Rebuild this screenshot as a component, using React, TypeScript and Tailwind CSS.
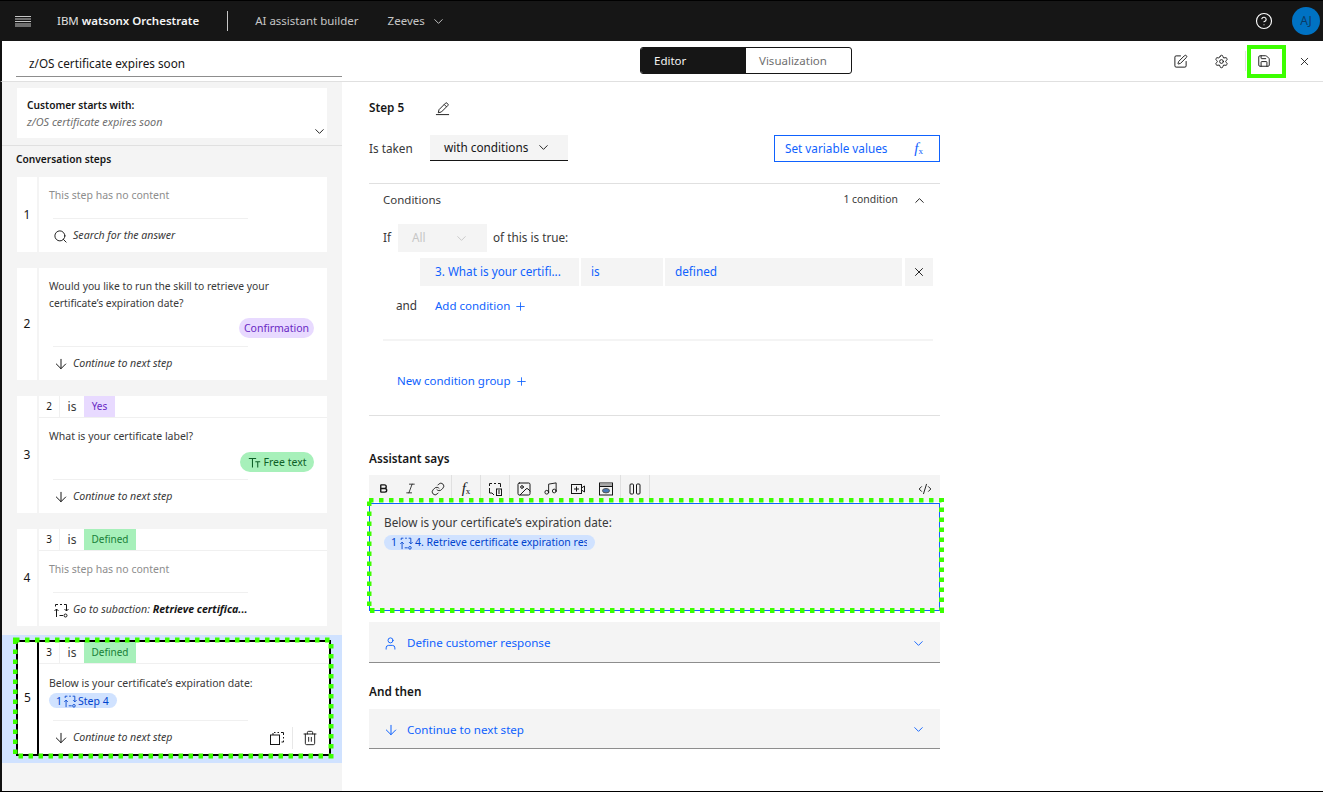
import type { ReactNode } from "react";
import {
  ArrowDown,
  Bold,
  ChevronDown,
  ChevronUp,
  CircleHelp,
  CodeXml,
  Image,
  Italic,
  Link,
  Music,
  Plus,
  Save,
  Search,
  Settings,
  SquarePen,
  Trash2,
  User,
  X,
} from "lucide-react";

function SubactionIcon({ size = 16 }: { size?: number }) {
  return (
    <svg width={size} height={size} viewBox="0 0 16 16" fill="none" stroke="currentColor" strokeWidth="1" className="shrink-0">
      <path d="M2.5 4.5v-2H5M7 2.5h2M11 2.5h2.5V9" />
      <path d="M11.5 7l2 2 2-2" />
      <path d="M3.5 15V7M1.5 9l2-2 2 2" />
      <path d="M6.5 13.5H10" />
      <circle cx="12.5" cy="13.5" r="1.5" />
    </svg>
  );
}

function EditLineIcon() {
  return (
    <svg width="15" height="15" viewBox="0 0 16 16" fill="none" stroke="currentColor" strokeWidth="1">
      <path d="M1 14.5h14" />
      <path d="M3.5 12.5l.8-3.3 6.9-6.9a1.1 1.1 0 0 1 1.6 0l.9.9a1.1 1.1 0 0 1 0 1.6L6.8 11.7z" />
      <path d="M9.8 3.7l2.5 2.5" />
    </svg>
  );
}

function TextIcon() {
  return (
    <svg width="13" height="13" viewBox="0 0 16 16" fill="none" stroke="currentColor" strokeWidth="1.3" className="shrink-0">
      <path d="M1 3h9M5.5 3v11M9 7h6M12 7v7" />
    </svg>
  );
}

function VariableIcon() {
  return (
    <svg width="16" height="16" viewBox="0 0 16 16" fill="none" stroke="currentColor" strokeWidth="1">
      <path d="M2.5 5V2.5H5M7 2.5h2M11 2.5h2.5V6" />
      <path d="M2.5 7v5H5l2 2" />
      <rect x="9.5" y="8" width="5" height="6.5" />
      <path d="M11 10h2M11 12h2" />
    </svg>
  );
}

function VideoIcon() {
  return (
    <svg width="16" height="16" viewBox="0 0 16 16" fill="none" stroke="currentColor" strokeWidth="1">
      <rect x="1.5" y="3.5" width="10" height="9" />
      <path d="M6.5 5.5v5M4 8h5M11.5 7l3-2v6l-3-2" />
    </svg>
  );
}

function PreviewIcon() {
  return (
    <svg width="16" height="16" viewBox="0 0 16 16" fill="none" stroke="currentColor" strokeWidth="1">
      <rect x="1.5" y="2" width="13" height="12" />
      <rect x="2" y="2.5" width="12" height="3" fill="#a8a8a8" stroke="none" />
      <path d="M1.5 5.5h13" />
      <ellipse cx="8" cy="9.7" rx="3.5" ry="2.2" fill="#4a7ab8" stroke="#555" />
    </svg>
  );
}

function ColumnsIcon() {
  return (
    <svg width="16" height="16" viewBox="0 0 16 16" fill="none" stroke="currentColor" strokeWidth="1">
      <rect x="3" y="3" width="3.5" height="10" rx="1" />
      <rect x="9.5" y="3" width="3.5" height="10" rx="1" />
    </svg>
  );
}

function CopyIcon() {
  return (
    <svg width="16" height="16" viewBox="0 0 16 16" fill="none" stroke="currentColor" strokeWidth="1">
      <rect x="1.5" y="5" width="9" height="9.5" />
      <path d="M5 2.5h1.5M8.5 2.5H10M12 2.5h2.5V5M14.5 7v1.5M14.5 10.5V12h-2" />
      <path d="M4 5V3" />
    </svg>
  );
}

function FxIcon({ className = "" }: { className?: string }) {
  return (
    <span className={`flex items-end font-['Liberation_Serif',serif] leading-none ${className}`}>
      <span className="text-[15px] italic">f</span>
      <span className="text-[9px] not-italic">x</span>
    </span>
  );
}

function Chips({ num, label, tone }: { num: string; label: string; tone: "purple" | "green" }) {
  return (
    <div className="flex h-[22px] shrink-0 items-stretch border-b border-[#f0f0f0] text-[12px]">
      <div className="flex w-[21px] items-center justify-center border-r border-[#f0f0f0] text-[10px] text-[#161616]">{num}</div>
      <div className="flex w-[24px] items-center justify-center text-[#393939]">is</div>
      <div
        className={
          tone === "purple"
            ? "flex w-[31px] items-center justify-center bg-[#e8daff] text-[10px] text-[#6929c4]"
            : "flex w-[52px] items-center justify-center bg-[#a7f0ba] text-[10px] text-[#198038]"
        }
      >
        {label}
      </div>
    </div>
  );
}

function Footer({ icon, children, extra }: { icon: ReactNode; children: ReactNode; extra?: ReactNode }) {
  return (
    <div className="flex h-[34px] shrink-0 items-center pl-[14px] text-[#393939]">
      <span className="flex w-[20px] shrink-0 items-center text-[#161616]">{icon}</span>
      <span className="text-[10.6px] italic">{children}</span>
      {extra}
    </div>
  );
}

function FooterRule() {
  return <div className="ml-[14px] h-px w-[195px] shrink-0 bg-[#f0f0f0]" />;
}

function StepCard({
  num,
  height,
  children,
}: {
  num: number;
  height: string;
  children: ReactNode;
}) {
  return (
    <div className={`ml-[15px] mr-[15px] flex ${height} items-stretch gap-[2px]`}>
      <div className="flex w-[20px] items-center justify-center bg-white text-[12px] text-[#161616]">{num}</div>
      <div className="flex min-w-0 flex-1 flex-col bg-white">{children}</div>
    </div>
  );
}

const contentText = "text-[10.5px] text-[#393939]";

function Steps() {
  const next = <ArrowDown size={16} strokeWidth={1.5} />;
  return (
    <div className="flex flex-col">
      <div className="mb-[16px]">
        <StepCard num={1} height="h-[75px]">
          <div className="flex h-[41px] shrink-0 items-start pl-[10px] pt-[12px] text-[10.5px] leading-[13px] text-[#8d8d8d]">This step has no content</div>
          <FooterRule />
          <Footer icon={<Search size={15} strokeWidth={1.5} />}>Search for the answer</Footer>
        </StepCard>
      </div>
      <div className="mb-[16px]">
        <StepCard num={2} height="h-[112px]">
          <div className={`h-[78px] shrink-0 pl-[10px] pt-[10px] ${contentText} leading-[17px]`}>
            <p className="w-[240px] text-[10.3px]">Would you like to run the skill to retrieve your certificate’s expiration date?</p>
            <div className="mr-[13px] mt-[6px] flex justify-end">
              <span className="flex h-[20px] w-[75px] items-center justify-center rounded-full bg-[#e8daff] text-[10.5px] text-[#6929c4]">Confirmation</span>
            </div>
          </div>
          <FooterRule />
          <Footer icon={next}>Continue to next step</Footer>
        </StepCard>
      </div>
      <div className="mb-[16px]">
        <StepCard num={3} height="h-[117px]">
          <Chips num="2" label="Yes" tone="purple" />
          <div className={`h-[61px] shrink-0 pl-[10px] pt-[11px] ${contentText} leading-[15px]`}>
            <p>What is your certificate label?</p>
            <div className="mr-[13px] mt-[8px] flex justify-end">
              <span className="flex h-[20px] w-[74px] items-center justify-center gap-[3px] rounded-full bg-[#a7f0ba] text-[10.5px] text-[#0e6027]">
                <TextIcon />
                Free text
              </span>
            </div>
          </div>
          <FooterRule />
          <Footer icon={next}>Continue to next step</Footer>
        </StepCard>
      </div>
      <div className="mb-[9px]">
        <StepCard num={4} height="h-[97px]">
          <Chips num="3" label="Defined" tone="green" />
          <div className="h-[41px] shrink-0 pl-[10px] pt-[12px] text-[10.5px] leading-[13px] text-[#8d8d8d]">This step has no content</div>
          <FooterRule />
          <Footer icon={<SubactionIcon />}>
            Go to subaction: <b className="font-bold text-[#161616]">Retrieve certifica...</b>
          </Footer>
        </StepCard>
      </div>
      <div className="flex h-[128px] flex-col bg-[#d0e2ff] pt-[5px]">
        <div className="relative ml-[14px] mr-[11px] flex h-[116px] border-2 border-black bg-white">
          <div className="flex w-[21px] shrink-0 items-center justify-center border-r-2 border-black text-[12px] text-[#161616]">5</div>
          <div className="flex min-w-0 flex-1 flex-col">
            <Chips num="3" label="Defined" tone="green" />
            <div className={`h-[56px] shrink-0 pl-[10px] pt-[12px] ${contentText} leading-[14px]`}>
              <p>Below is your certificate’s expiration date:</p>
              <span className="mt-[3px] flex h-[15px] w-[68px] items-center gap-[1px] rounded-full bg-[#d0e2ff] pl-[7px] text-[#0043ce]">
                1
                <SubactionIcon size={14} />
                Step 4
              </span>
            </div>
            <FooterRule />
            <Footer
              icon={next}
              extra={
                <div className="ml-auto flex items-center pr-[11px] text-[#161616]">
                  <CopyIcon />
                  <span className="ml-[7px] mr-[9px] h-[22px] w-px bg-[#e8e8e8]" />
                  <Trash2 size={16} strokeWidth={1.4} />
                </div>
              }
            >
              Continue to next step
            </Footer>
          </div>
          <svg className="pointer-events-none absolute left-[-5px] top-[-5px]" width="322" height="122" fill="none">
            <rect x="2" y="3" width="316" height="116" stroke="#3cff00" strokeWidth="5" strokeDasharray="4.5 5.5" />
          </svg>
        </div>
      </div>
    </div>
  );
}

function LeftPanel() {
  return (
    <aside className="flex w-[340px] shrink-0 flex-col overflow-hidden bg-[#f4f4f4]">
      <div className="ml-[15px] mr-[15px] mt-[6px] flex h-[50px] flex-col bg-white pl-[10px] pt-[11px]">
        <div className="text-[10.2px] font-semibold leading-[13px] text-[#161616]">Customer starts with:</div>
        <div className="mt-[3px] text-[10.9px] italic leading-[13px] text-[#6f6f6f]">z/OS certificate expires soon</div>
        <div className="mt-[-4px] flex justify-end text-[#161616]">
          <ChevronDown size={15} strokeWidth={1.5} />
        </div>
      </div>
      <div className="mt-[7px] h-px bg-[#e0e0e0]" />
      <div className="flex h-[31px] items-center pb-[3px] pl-[14px] text-[10.2px] font-semibold text-[#161616]">Conversation steps</div>
      <Steps />
    </aside>
  );
}

const blue = "text-[#0f62fe]";

function Conditions() {
  return (
    <section className="mt-[21px] flex h-[233px] flex-col border-y border-[#e0e0e0] pl-[14px] pr-[7px] text-[11.75px] text-[#393939]">
      <div className="flex h-[32px] shrink-0 items-center">
        <span className="text-[11.5px]">Conditions</span>
        <span className="ml-auto text-[10.4px]">1 condition</span>
        <ChevronUp size={15} strokeWidth={1.5} className="ml-[14px] mr-[6px] text-[#161616]" />
      </div>
      <div className="mt-[8px] flex h-[28px] items-center">
        <span className="w-[15px]">If</span>
        <div className="flex h-full w-[89px] items-center justify-between bg-[#f4f4f4] pl-[14px] pr-[18px] text-[#c6c6c6]">
          All
          <ChevronDown size={15} strokeWidth={1.5} />
        </div>
        <span className="ml-[6px]">of this is true:</span>
      </div>
      <div className={`ml-[37px] mt-[6px] flex h-[28px] gap-[2px] ${blue}`}>
        <div className="flex w-[159px] items-center bg-[#f4f4f4] pl-[15px]">3. What is your certifi...</div>
        <div className="flex w-[82px] items-center bg-[#f4f4f4] pl-[10px]">is</div>
        <div className="flex w-[237px] items-center bg-[#f4f4f4] pl-[10px]">defined</div>
        <div className="ml-[1px] flex w-[28px] items-center justify-center bg-[#f4f4f4] text-[#161616]">
          <X size={14} strokeWidth={1.6} />
        </div>
      </div>
      <div className="mt-[6px] flex h-[28px] items-center">
        <span className="ml-[13px] w-[39px]">and</span>
        <span className={`flex items-center gap-[4px] text-[11.5px] ${blue}`}>
          Add condition
          <Plus size={13} strokeWidth={1.6} />
        </span>
      </div>
      <div className="mt-[19px] h-[2px] bg-[#f4f4f4]" />
      <div className={`mt-[26px] flex h-[28px] items-center gap-[4px] pl-[14px] text-[11.5px] ${blue}`}>
        New condition group
        <Plus size={13} strokeWidth={1.6} />
      </div>
    </section>
  );
}

function ToolCell({ w, sep, children }: { w: string; sep?: boolean; children: ReactNode }) {
  return (
    <div className={`flex ${w} items-center justify-center ${sep ? "border-r border-[#e0e0e0]" : ""}`}>{children}</div>
  );
}

function Editor() {
  return (
    <div className="relative">
      <div className="flex h-[27px] items-stretch bg-[#f4f4f4] pl-px text-[#161616]">
        <ToolCell w="w-[27px]"><Bold size={11} strokeWidth={3} /></ToolCell>
        <ToolCell w="w-[27px]"><Italic size={13} strokeWidth={1.5} /></ToolCell>
        <ToolCell w="w-[28px]" sep><Link size={14} strokeWidth={1.5} /></ToolCell>
        <ToolCell w="w-[29px]" sep><FxIcon /></ToolCell>
        <ToolCell w="w-[29px]" sep><VariableIcon /></ToolCell>
        <ToolCell w="w-[27px]"><Image size={16} strokeWidth={1.5} /></ToolCell>
        <ToolCell w="w-[27px]"><Music size={15} strokeWidth={1.5} /></ToolCell>
        <ToolCell w="w-[28px]"><VideoIcon /></ToolCell>
        <ToolCell w="w-[29px]" sep><PreviewIcon /></ToolCell>
        <ToolCell w="w-[29px]" sep><ColumnsIcon /></ToolCell>
        <div className="ml-auto flex w-[30px] items-center justify-center">
          <CodeXml size={14} strokeWidth={1.6} />
        </div>
      </div>
      <div className="mt-px h-[108px] border border-[#0f62fe] bg-[#f4f4f4] pl-[14px] pt-[11px] text-[11.75px] leading-[15px] text-[#393939]">
        <p>Below is your certificate’s expiration date:</p>
        <span className="mt-[5px] flex h-[15px] w-[211px] items-center gap-[2px] overflow-hidden whitespace-nowrap rounded-full bg-[#d0e2ff] pl-[7px] text-[10.5px] text-[#0043ce]">
          1
          <SubactionIcon size={14} />
          <span className="w-[172px] overflow-hidden">4. Retrieve certificate expiration response</span>
        </span>
      </div>
      <svg className="pointer-events-none absolute left-[-2px] top-[23px]" width="577" height="115" fill="none">
        <rect x="2" y="2" width="572.5" height="110.5" stroke="#3cff00" strokeWidth="5" strokeDasharray="4.5 5.5" />
      </svg>
    </div>
  );
}

function Accordion({ icon, label }: { icon: ReactNode; label: string }) {
  return (
    <div className={`flex h-full items-center border-b border-[#8d8d8d] bg-[#f4f4f4] pl-[14px] pr-[14px] pt-[2px] text-[11.6px] ${blue}`}>
      <span className="flex w-[24px] items-center">{icon}</span>
      {label}
      <ChevronDown size={15} strokeWidth={1.5} className="ml-auto" />
    </div>
  );
}

function MainPanel() {
  return (
    <main className="min-w-0 flex-1 bg-white pl-[27px]">
      <div className="w-[571px]">
        <div className="mt-[14px] flex h-[24px] items-center gap-[31px] text-[11.75px] font-semibold text-[#161616]">
          Step 5
          <EditLineIcon />
        </div>
        <div className="mt-[15px] flex h-[27px] items-center text-[11.75px] text-[#393939]">
          <span className="w-[61px] pt-px">Is taken</span>
          <div className="flex h-[26px] w-[138px] items-center justify-between self-start border-b border-[#161616] bg-[#f4f4f4] pl-[14px] pr-[17px] text-[#161616]">
            with conditions
            <ChevronDown size={15} strokeWidth={1.5} />
          </div>
          <div className={`ml-auto flex h-full w-[166px] items-center justify-between border border-[#0f62fe] pl-[10px] pr-[16px] ${blue}`}>
            Set variable values
            <FxIcon />
          </div>
        </div>
        <Conditions />
        <div className="mt-[34px] flex h-[17px] items-center text-[11.75px] font-semibold text-[#161616]">Assistant says</div>
        <div className="mt-[8px]"><Editor /></div>
        <div className="mt-[11px] h-[41px]">
          <Accordion icon={<User size={15} strokeWidth={1.5} />} label="Define customer response" />
        </div>
        <div className="mt-[20px] flex h-[17px] items-center text-[11.75px] font-semibold text-[#161616]">And then</div>
        <div className="mt-[9px] h-[40px]">
          <Accordion icon={<ArrowDown size={16} strokeWidth={1.5} />} label="Continue to next step" />
        </div>
      </div>
    </main>
  );
}

export default function App() {
  return (
    <div className="flex h-[792px] w-[1323px] flex-col overflow-hidden border-b border-black bg-white font-['Noto_Sans',sans-serif]">
      <header className="flex h-[41px] shrink-0 items-center border-t border-black bg-[#161616] text-[11.5px] text-[#c6c6c6]">
        <svg className="ml-[15px]" width="16" height="14" viewBox="0 0 16 14" fill="none" stroke="#c6c6c6" strokeWidth="1">
          <path d="M0 2.5h16M0 5h16M0 7.5h16M0 10h16M0 12h16" />
        </svg>
        <span className="ml-[26px] text-[11.5px] text-[#e0e0e0]">
          IBM <b className="font-semibold text-[#f4f4f4]">watsonx Orchestrate</b>
        </span>
        <span className="ml-[28px] h-[20px] w-px bg-[#c6c6c6]" />
        <span className="ml-[27px]">AI assistant builder</span>
        <span className="ml-[29px]">Zeeves</span>
        <ChevronDown size={15} strokeWidth={1.5} className="ml-[6px]" />
        <CircleHelp size={18} strokeWidth={1.5} className="ml-auto text-white" />
        <span className="ml-[19px] mr-[3px] flex h-[28px] w-[28px] items-center justify-center rounded-full bg-[#0072c3] text-[12px] text-[#0b3b66]">AJ</span>
      </header>
      <div className="flex h-[41px] shrink-0 items-stretch border-b border-l-2 border-b-[#e0e0e0] border-l-[#111]">
        <div className="flex w-[340px] shrink-0 items-start pl-[14px]">
          <div className="flex h-[36px] w-full items-center border-b border-[#8d8d8d] pl-[13px] pt-[10px] text-[11.75px] text-[#161616]">z/OS certificate expires soon</div>
        </div>
        <div className="ml-[298px] mt-[6px] flex h-[27px] w-[212px] overflow-hidden rounded-[3px] border border-[#161616] text-[11.5px]">
          <div className="flex w-[105px] items-center bg-[#161616] pl-[13px] text-[#f4f4f4]">Editor</div>
          <div className="flex flex-1 items-center pl-[13px] text-[#6f6f6f]">Visualization</div>
        </div>
        <div className="ml-auto flex items-center text-[#161616]">
          <SquarePen size={15} strokeWidth={1.5} />
          <Settings size={15} strokeWidth={1.5} className="ml-[26px]" />
          <span className="ml-[16px] h-[20px] w-px bg-[#e0e0e0]" />
          <span className="ml-[1px] flex h-[33px] w-[39px] items-center justify-center border-4 border-[#3cff00] pr-[5px]">
            <Save size={14} strokeWidth={1.6} />
          </span>
          <X size={13} strokeWidth={1.6} className="ml-[12px] mr-[12px]" />
        </div>
      </div>
      <div className="flex min-h-0 flex-1 border-l-2 border-[#111]">
        <LeftPanel />
        <MainPanel />
      </div>
    </div>
  );
}
